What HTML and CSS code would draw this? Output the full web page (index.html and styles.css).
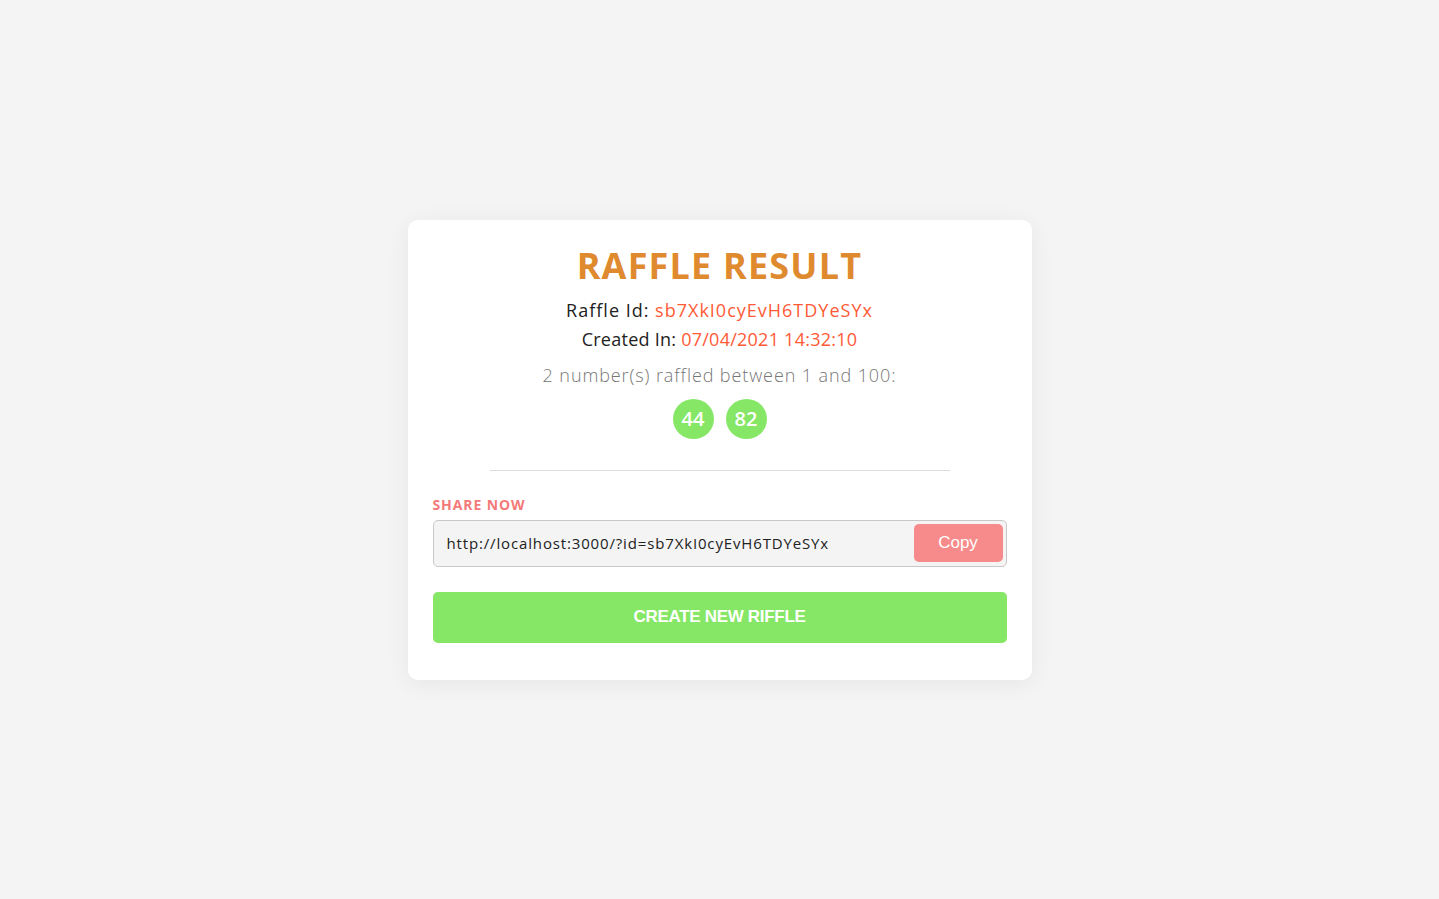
FILE: index.html
```html
<!DOCTYPE html>
<html lang="en">
<head>
<meta charset="utf-8">
<title>Raffle Result</title>
<link rel="stylesheet" href="styles.css">
</head>
<body>
<main class="card">
  <h1 class="title">RAFFLE RESULT</h1>
  <p class="info">Raffle Id: <span class="accent">sb7XkI0cyEvH6TDYeSYx</span></p>
  <p class="info info-date">Created In: <span class="accent">07/04/2021 14:32:10</span></p>
  <p class="summary">2 number(s) raffled between 1 and 100:</p>
  <div class="balls">
    <span class="ball">44</span>
    <span class="ball">82</span>
  </div>
  <hr class="divider">
  <div class="share">
    <label class="share-label">SHARE NOW</label>
    <div class="share-box">
      <span class="share-url">http://localhost:3000/?id=sb7XkI0cyEvH6TDYeSYx</span>
      <button class="copy-btn">Copy</button>
    </div>
  </div>
  <button class="create-btn">CREATE NEW RIFFLE</button>
</main>
</body>
</html>
```
FILE: styles.css
```css
html, body {
  margin: 0;
  padding: 0;
}
body {
  background: #f4f4f4;
  min-height: 100vh;
  display: flex;
  align-items: center;
  justify-content: center;
  font-family: "Open Sans", "DejaVu Sans", sans-serif;
}
.card {
  width: 624px;
  height: 460px;
  box-sizing: border-box;
  background: #ffffff;
  border-radius: 10px;
  box-shadow: 0 4px 24px rgba(0, 0, 0, 0.06);
  padding: 24px 25px 37px;
  display: flex;
  flex-direction: column;
  align-items: center;
}
.title {
  margin: 0;
  font-size: 36px;
  line-height: 44px;
  font-weight: 700;
  color: #df8a2e;
  letter-spacing: 1.2px;
}
.info {
  margin: 0;
  font-size: 18px;
  line-height: 29px;
  font-weight: 400;
  color: #222;
  letter-spacing: 1px;
}
.info:first-of-type {
  margin-top: 8px;
}
.info-date {
  letter-spacing: 0.25px;
}
.accent {
  color: #ff5a36;
}
.summary {
  margin: 7px 0 0;
  font-size: 18px;
  line-height: 29px;
  font-weight: 300;
  color: #777;
  letter-spacing: 0.9px;
}
.balls {
  margin-top: 9px;
  display: flex;
  gap: 12px;
}
.ball {
  width: 41px;
  height: 40px;
  border-radius: 50%;
  background: #86e766;
  color: #fff;
  font-size: 20px;
  font-weight: 600;
  display: flex;
  align-items: center;
  justify-content: center;
}
.divider {
  width: 460px;
  margin: 31px 0 0;
  border: 0;
  border-top: 1px solid #dddddd;
}
.share {
  align-self: stretch;
  margin-top: 26px;
  display: flex;
  flex-direction: column;
  gap: 7px;
}
.share-label {
  font-size: 14px;
  line-height: 16px;
  font-weight: 700;
  color: #f47a7a;
  letter-spacing: 0.9px;
}
.share-box {
  height: 47px;
  box-sizing: border-box;
  border: 1px solid #c8c8c8;
  border-radius: 5px;
  background: #f4f4f4;
  display: flex;
  align-items: center;
  justify-content: space-between;
  padding: 0 3px 0 13px;
}
.share-url {
  font-size: 15px;
  color: #222;
  letter-spacing: 0.85px;
}
.copy-btn {
  width: 89px;
  height: 38px;
  border: 0;
  border-radius: 5px;
  background: #f78a8a;
  color: #fff;
  font-family: "Liberation Sans", Arial, sans-serif;
  font-size: 17px;
}
.create-btn {
  align-self: stretch;
  margin-top: 25px;
  height: 51px;
  border: 0;
  border-radius: 5px;
  background: #86e766;
  color: #fff;
  font-family: "Liberation Sans", Arial, sans-serif;
  font-size: 17px;
  font-weight: 700;
  letter-spacing: -0.3px;
}
```
